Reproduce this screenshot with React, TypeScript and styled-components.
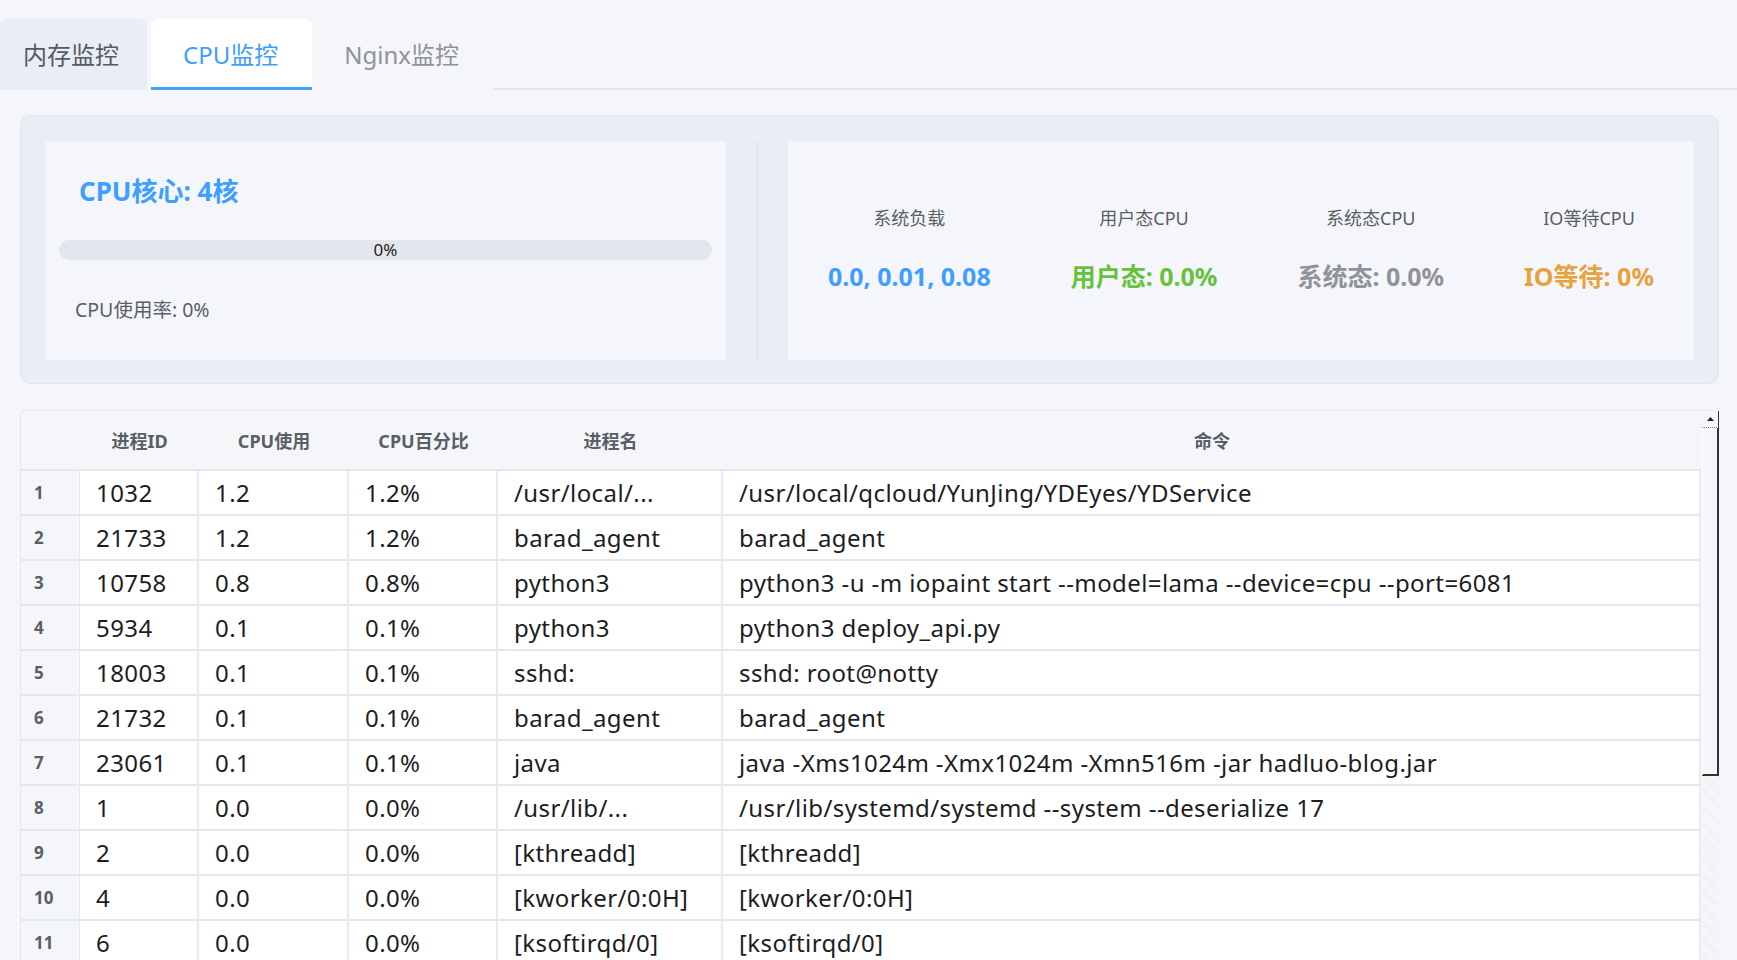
import React from 'react';
import styled, { createGlobalStyle } from 'styled-components';

const GlobalStyle = createGlobalStyle`
  html, body {
    margin: 0;
    padding: 0;
    height: 960px;
    overflow: hidden;
    background: #f4f6fa;
    font-family: "Noto Sans", "Noto Sans CJK SC", sans-serif;
  }
`;

const Page = styled.div`
  width: 1737px;
  height: 960px;
  overflow: hidden;
  padding-top: 19px;
  box-sizing: border-box;
`;

const TabBar = styled.div`
  display: flex;
  align-items: stretch;
  height: 71px;
`;

const Tab = styled.div<{ active?: boolean; filled?: boolean; first?: boolean }>`
  display: flex;
  align-items: center;
  padding: 1px ${(p) => (p.first ? '28px' : '34px')} 0 ${(p) => (p.first ? '23px' : '32px')};
  margin-right: ${(p) => (p.first ? '4px' : '0')};
  font-size: 24px;
  color: ${(p) => (p.active ? '#409eff' : p.filled ? '#555a63' : '#909399')};
  background: ${(p) => (p.active ? '#ffffff' : p.filled ? '#e9edf5' : 'transparent')};
  border-radius: 8px 8px 0 0;
  box-sizing: border-box;
  border-bottom: 3px solid ${(p) => (p.active ? '#409eff' : 'transparent')};
  cursor: pointer;
`;

const TabLine = styled.div`
  flex: 1;
  border-bottom: 2px solid #e1e4ea;
`;

const StatCard = styled.div`
  margin: 25px 18px 0 20px;
  padding: 25px 24px 23px 24px;
  background: #e9edf5;
  border: 1px solid #e1e5ee;
  border-radius: 10px;
  display: grid;
  grid-template-columns: 681px 62px 1fr;
  height: 219px;
  box-sizing: content-box;
`;

const CorePanel = styled.div`
  background: #f4f6fb;
  display: flex;
  flex-direction: column;
  padding: 0 14px;
`;

const CoreTitle = styled.div`
  margin-top: 29px;
  padding-left: 20px;
  line-height: 42px;
  font-size: 26px;
  font-weight: 700;
  color: #409eff;
`;

const ProgressTrack = styled.div`
  margin-top: 28px;
  height: 20px;
  border-radius: 10px;
  background: #e3e6ed;
  position: relative;
`;

const ProgressFill = styled.div`
  height: 100%;
  border-radius: 10px;
  background: #409eff;
`;

const ProgressText = styled.span`
  position: absolute;
  left: 0;
  right: 0;
  top: 0;
  text-align: center;
  font-size: 17px;
  line-height: 20px;
  color: #222;
`;

const UsageText = styled.div`
  margin-top: 35px;
  padding-left: 16px;
  line-height: 30px;
  font-size: 19.5px;
  color: #5a5e66;
`;

const Divider = styled.div`
  justify-self: center;
  width: 2px;
  background: #e0e4ee;
`;

const LoadPanel = styled.div`
  background: #f4f6fb;
  display: flex;
  justify-content: space-around;
  align-items: center;
`;

const StatItem = styled.div`
  display: flex;
  flex-direction: column;
  align-items: center;
  gap: 29px;
  margin-top: -2px;
`;

const StatLabel = styled.div`
  font-size: 18px;
  line-height: 24px;
  color: #5a5e66;
`;

const StatValue = styled.div<{ tone: string }>`
  font-size: 25px;
  line-height: 34px;
  font-weight: 700;
  color: ${(p) => p.tone};
  white-space: nowrap;
`;

const TableWrap = styled.div`
  margin: 26px 18px 0 20px;
  display: flex;
  align-items: flex-start;
  background: #f4f6fa;
  border: 1px solid #e4e7ed;
  border-right: none;
  border-bottom: none;
  border-radius: 6px 0 0 0;
`;

const Grid = styled.div`
  flex: 1;
  display: grid;
  grid-template-columns: 59px 119px 150px 149px 225px 1fr;
`;

const HeadCell = styled.div`
  height: 58px;
  display: flex;
  align-items: center;
  justify-content: center;
  font-size: 18px;
  font-weight: 700;
  color: #5a5e66;
  border-bottom: 2px solid #e4e7ed;
`;

const IndexCell = styled.div`
  height: 43px;
  display: flex;
  align-items: center;
  padding-left: 13px;
  font-size: 17px;
  font-weight: 700;
  color: #5a5e66;
  border-bottom: 2px solid #e4e7ed;
  border-right: 1px solid #e4e7ed;
`;

const Cell = styled.div`
  height: 43px;
  display: flex;
  align-items: center;
  padding-left: 16px;
  background: #ffffff;
  font-size: 24px;
  letter-spacing: 0.4px;
  color: #1d1d1f;
  white-space: nowrap;
  overflow: hidden;
  border-bottom: 2px solid #e4e7ed;
  border-right: 2px solid #e8ebf0;
`;

const Scrollbar = styled.div`
  width: 17px;
  display: flex;
  flex-direction: column;
  margin-left: 1px;
`;

const ScrollButton = styled.div`
  height: 16px;
  display: flex;
  align-items: center;
  justify-content: center;
  background: #f4f6fa;
  border-right: 1px solid #333;
  border-bottom: 1px dotted #888;
`;

const ScrollThumb = styled.div`
  height: 348px;
  background: #f4f6fa;
  border-left: 1px solid #fff;
  border-right: 2px solid #333;
  border-bottom: 2px solid #333;
  box-sizing: border-box;
`;

const ScrollTrack = styled.div`
  height: 200px;
  background-image: repeating-linear-gradient(45deg, #eef0f4 0 1px, #f8f9fb 1px 2px);
`;

const rows = [
  ['1032', '1.2', '1.2%', '/usr/local/...', '/usr/local/qcloud/YunJing/YDEyes/YDService'],
  ['21733', '1.2', '1.2%', 'barad_agent', 'barad_agent'],
  ['10758', '0.8', '0.8%', 'python3', 'python3 -u -m iopaint start --model=lama --device=cpu --port=6081'],
  ['5934', '0.1', '0.1%', 'python3', 'python3 deploy_api.py'],
  ['18003', '0.1', '0.1%', 'sshd:', 'sshd: root@notty'],
  ['21732', '0.1', '0.1%', 'barad_agent', 'barad_agent'],
  ['23061', '0.1', '0.1%', 'java', 'java -Xms1024m -Xmx1024m -Xmn516m -jar hadluo-blog.jar'],
  ['1', '0.0', '0.0%', '/usr/lib/...', '/usr/lib/systemd/systemd --system --deserialize 17'],
  ['2', '0.0', '0.0%', '[kthreadd]', '[kthreadd]'],
  ['4', '0.0', '0.0%', '[kworker/0:0H]', '[kworker/0:0H]'],
  ['6', '0.0', '0.0%', '[ksoftirqd/0]', '[ksoftirqd/0]'],
];

const stats = [
  { label: '系统负载', value: '0.0, 0.01, 0.08', tone: '#409eff' },
  { label: '用户态CPU', value: '用户态: 0.0%', tone: '#67c23a' },
  { label: '系统态CPU', value: '系统态: 0.0%', tone: '#909399' },
  { label: 'IO等待CPU', value: 'IO等待: 0%', tone: '#e6a23c' },
];

const headers = ['', '进程ID', 'CPU使用', 'CPU百分比', '进程名', '命令'];

export default function App() {
  const usage = 0;
  return (
    <Page>
      <GlobalStyle />
      <TabBar>
        <Tab first filled>内存监控</Tab>
        <Tab active>CPU监控</Tab>
        <Tab>Nginx监控</Tab>
        <TabLine />
      </TabBar>

      <StatCard>
        <CorePanel>
          <CoreTitle>CPU核心: 4核</CoreTitle>
          <ProgressTrack>
            <ProgressFill style={{ width: `${usage}%` }} />
            <ProgressText>{usage}%</ProgressText>
          </ProgressTrack>
          <UsageText>CPU使用率: {usage}%</UsageText>
        </CorePanel>
        <Divider />
        <LoadPanel>
          {stats.map((s) => (
            <StatItem key={s.label}>
              <StatLabel>{s.label}</StatLabel>
              <StatValue tone={s.tone}>{s.value}</StatValue>
            </StatItem>
          ))}
        </LoadPanel>
      </StatCard>

      <TableWrap>
        <Grid>
          {headers.map((h, i) => (
            <HeadCell key={`h-${i}`}>{h}</HeadCell>
          ))}
          {rows.map((r, i) => (
            <React.Fragment key={`r-${i}`}>
              <IndexCell>{i + 1}</IndexCell>
              {r.map((c, j) => (
                <Cell key={`c-${i}-${j}`}>{c}</Cell>
              ))}
            </React.Fragment>
          ))}
        </Grid>
        <Scrollbar>
          <ScrollButton>
            <svg width="7" height="4" viewBox="0 0 7 4">
              <path d="M0 4 L3.5 0 L7 4 Z" fill="#222" />
            </svg>
          </ScrollButton>
          <ScrollThumb />
          <ScrollTrack />
        </Scrollbar>
      </TableWrap>
    </Page>
  );
}
